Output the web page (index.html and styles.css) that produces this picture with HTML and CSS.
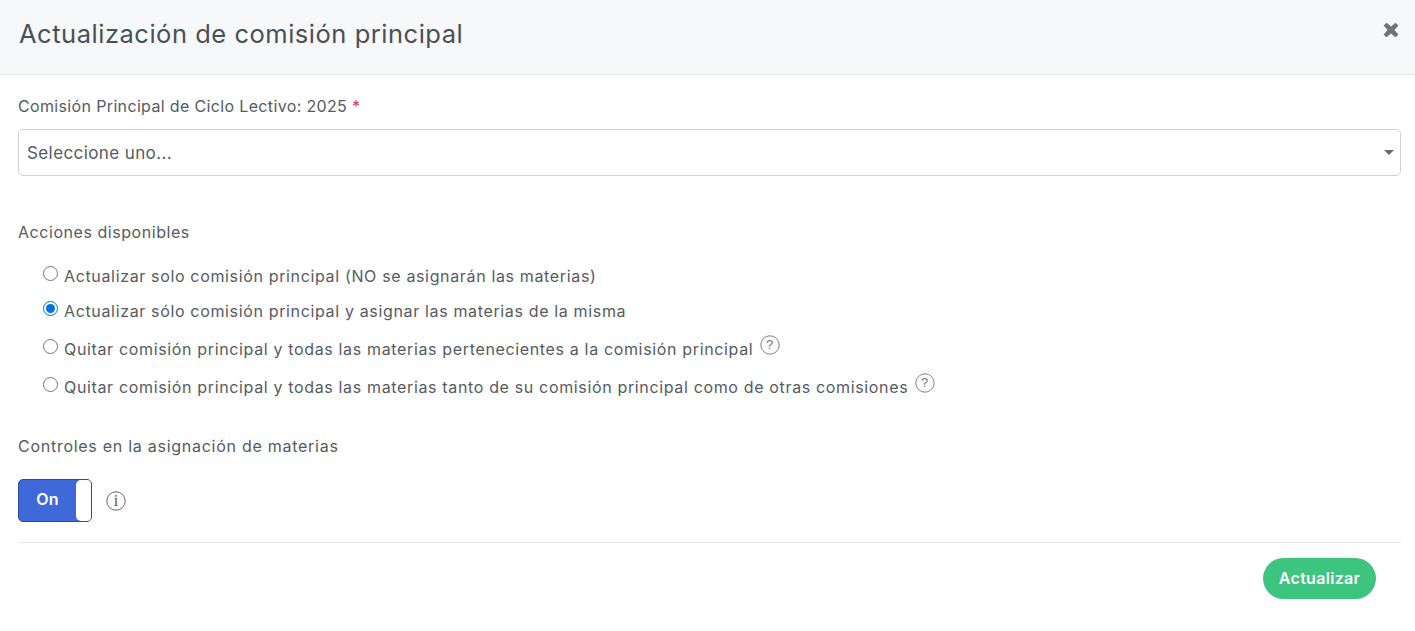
FILE: index.html
```html
<!DOCTYPE html>
<html lang="es">
<head>
  <meta charset="UTF-8" />
  <meta name="viewport" content="width=device-width, initial-scale=1.0" />
  <title>Actualización de comisión principal</title>
  <link rel="stylesheet" href="styles.css">
</head>
<body>
  <header class="modal-header">
    <h1>Actualización de comisión principal</h1>
    <button type="button" class="close-btn" aria-label="Cerrar">
      <svg width="16" height="16" viewBox="0 0 16 16"><path d="M3.6.8 8 4.6 12.4.8l3 2.8L11.4 8l4 4.4-3 2.8L8 11.4l-4.4 3.8-3-2.8L4.6 8l-4-4.4z" fill="#707275"/></svg>
    </button>
  </header>

  <form class="modal-body">
    <label class="field-label first">Comisión Principal de Ciclo Lectivo: 2025 <span class="required">*</span></label>
    <div class="select-box">
      <span>Seleccione uno...</span>
      <span class="caret"></span>
    </div>

    <div class="field-label actions-label">Acciones disponibles</div>
    <div class="radio-list">
      <label class="radio-row"><input type="radio" name="accion" /><span>Actualizar solo comisión principal (NO se asignarán las materias)</span></label>
      <label class="radio-row tall"><input type="radio" name="accion" checked /><span>Actualizar sólo comisión principal y asignar las materias de la misma</span></label>
      <label class="radio-row tall"><input type="radio" name="accion" /><span>Quitar comisión principal y todas las materias pertenecientes a la comisión principal</span>
        <svg class="help-icon" width="20" height="20" viewBox="0 0 20 20"><circle cx="10" cy="10" r="9.2" fill="none" stroke="#6c757d" stroke-width=".9"/><text x="10" y="14.4" text-anchor="middle" class="icon-text">?</text></svg>
      </label>
      <label class="radio-row tall"><input type="radio" name="accion" /><span>Quitar comisión principal y todas las materias tanto de su comisión principal como de otras comisiones</span>
        <svg class="help-icon" width="20" height="20" viewBox="0 0 20 20"><circle cx="10" cy="10" r="9.2" fill="none" stroke="#6c757d" stroke-width=".9"/><text x="10" y="14.4" text-anchor="middle" class="icon-text">?</text></svg>
      </label>
    </div>

    <div class="field-label controls-label">Controles en la asignación de materias</div>
    <div class="toggle-row">
      <div class="toggle">
        <span class="toggle-on">On</span>
        <span class="toggle-handle"></span>
      </div>
      <svg class="info-icon" width="20" height="20" viewBox="0 0 20 20"><circle cx="10" cy="10" r="9.2" fill="none" stroke="#666" stroke-width="1"/><text x="10" y="15.2" text-anchor="middle" class="icon-serif">i</text></svg>
    </div>

    <div class="form-footer">
      <button type="button" class="submit-btn">Actualizar</button>
    </div>
  </form>
</body>
</html>
```

FILE: styles.css
```css
body {
  margin: 0;
  font-family: 'Inter', 'Open Sans', sans-serif;
  font-size: 16px;
  color: #555b63;
  background: #fff;
}
.modal-header {
  display: flex;
  justify-content: space-between;
  align-items: flex-start;
  height: 75px;
  padding: 0 16px 0 19px;
  box-sizing: border-box;
  background: #f7f8fa;
  border-bottom: 1px solid #e8eaed;
}
h1 {
  margin: 0;
  font-size: 25.5px;
  font-weight: 400;
  line-height: 68px;
  color: #4a5058;
  letter-spacing: 0.52px;
}
.close-btn {
  display: flex;
  margin-top: 22px;
  padding: 0;
  border: none;
  background: none;
}
.modal-body {
  padding: 0 14px 0 18px;
}
.field-label {
  line-height: 22px;
}
.first {
  display: block;
  margin-top: 20px;
  letter-spacing: 0.35px;
}
.required {
  color: #e6315e;
}
.select-box {
  display: flex;
  justify-content: space-between;
  align-items: center;
  height: 47px;
  margin-top: 12px;
  padding: 0 6px 0 8px;
  box-sizing: border-box;
  border: 1px solid #ced1d7;
  border-radius: 5px;
  font-size: 17px;
  letter-spacing: 0.4px;
}
.caret {
  width: 0;
  height: 0;
  border-left: 5px solid transparent;
  border-right: 5px solid transparent;
  border-top: 5px solid #666c74;
}
.actions-label {
  margin-top: 45px;
  letter-spacing: 0.55px;
}
.radio-list {
  margin-top: 22px;
  padding-left: 25px;
  letter-spacing: 0.65px;
}
.radio-row {
  display: flex;
  align-items: flex-start;
  height: 35px;
  line-height: 22px;
}
.radio-row.tall {
  height: 38px;
}
.radio-row input {
  width: 15px;
  height: 15px;
  margin: 1px 6px 0 0;
  accent-color: #0071d8;
}
.help-icon {
  margin: -3px 0 0 7px;
}
.icon-text {
  font-family: 'Liberation Sans', sans-serif;
  font-size: 13px;
  fill: #777;
}
.icon-serif {
  font-family: 'Liberation Serif', serif;
  font-size: 16px;
  fill: #555;
}
.controls-label {
  margin-top: 21px;
  letter-spacing: 0.73px;
}
.toggle-row {
  display: flex;
  align-items: center;
  gap: 14px;
  margin-top: 22px;
}
.toggle {
  display: flex;
  width: 74px;
  height: 43px;
  box-sizing: border-box;
  border: 1px solid #2d4a9e;
  border-radius: 5px;
  overflow: hidden;
  background: #3f68d8;
}
.toggle-on {
  flex: 1;
  line-height: 39px;
  text-align: center;
  font-size: 16px;
  font-weight: 600;
  letter-spacing: 0.3px;
  color: #fff;
}
.toggle-handle {
  width: 15px;
  background: #fff;
  border-radius: 5px 0 0 5px;
}
.form-footer {
  display: flex;
  justify-content: flex-end;
  margin-top: 20px;
  padding: 15px 25px 0 0;
  border-top: 1px solid #e4e6ef;
}
.submit-btn {
  width: 113px;
  height: 41px;
  padding: 0 0 2px;
  border: none;
  border-radius: 21px;
  background: #3dc57f;
  color: #fff;
  font-family: inherit;
  font-size: 16px;
  font-weight: 600;
  letter-spacing: 0.3px;
}
```
